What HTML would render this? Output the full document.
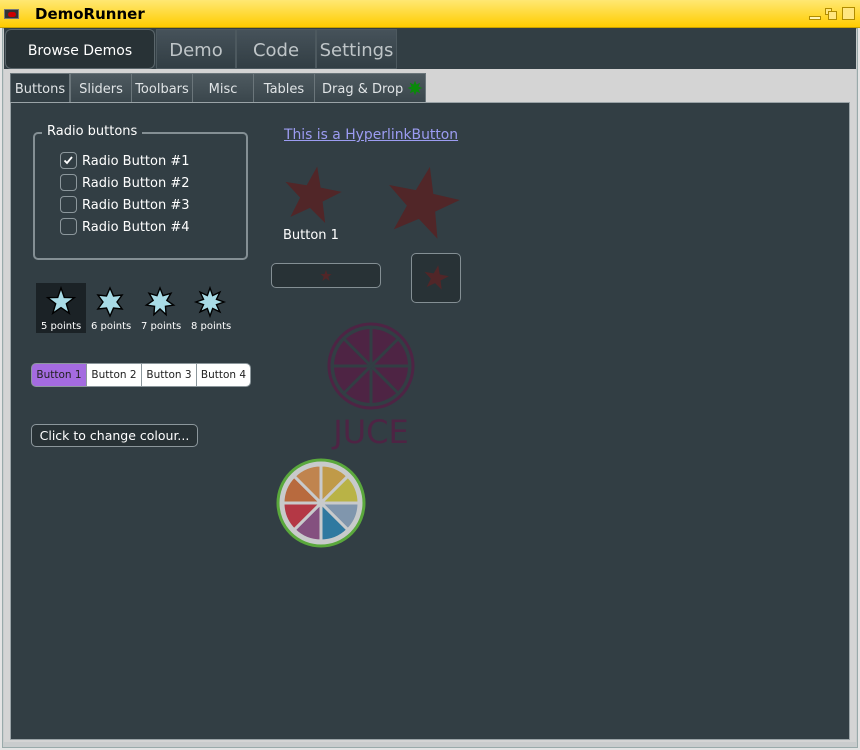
<!DOCTYPE html>
<html><head><meta charset="utf-8"><style>
*{margin:0;padding:0;box-sizing:border-box}
body{width:860px;height:750px;background:#e4e4e4;position:relative;overflow:hidden;font-family:"DejaVu Sans","Liberation Sans",sans-serif;}
.a{position:absolute}
#title{left:0;top:0;width:860px;height:28px;background:linear-gradient(#ffe873,#ffcc00);border-bottom:1px solid #c9a200}
#title .t{left:35px;top:5px;font-weight:bold;font-size:15px;color:#000}
#frame{left:2px;top:28px;width:856px;height:720px;background:#c9cccd;border:1px solid #9aa}
#top{left:4px;top:28px;width:852px;height:41px;background:#323e44}
.tt{top:29px;height:40px;color:#bfc5c8;font-size:18px;text-align:center;line-height:42px;background:linear-gradient(#46525a,#323e44);border:1px solid #4d595f}
#gray{left:4px;top:69px;width:852px;height:673px;background:#d4d4d4}
.it{top:73px;height:30px;color:#e0e4e6;font-size:13px;text-align:center;line-height:31px;background:linear-gradient(#4e5a60,#3a464c);border:1px solid #6b767b}
#panel{left:10px;top:102px;width:840px;height:638px;background:#323e44;border:1px solid #9aa3a7}
.w{color:#fff;font-size:13px;white-space:nowrap}
.cb{width:17px;height:17px;border:1.5px solid #8c979c;border-radius:4px}
.seg{top:364px;height:22px;font-size:10.5px;line-height:23px;text-align:center;background:#fff;color:#222}
</style></head><body>
<div class="a" id="frame"></div>
<div class="a" id="title">
 <div class="a" style="left:4px;top:9px;width:15px;height:10px;background:#333;border:1px solid #777"><div style="margin:2px 3px;width:8px;height:5px;background:#c00;border-radius:3px"></div></div>
 <div class="a t">DemoRunner</div>
 <div class="a" style="left:809px;top:16px;width:12px;height:4px;border:1px solid #b08c00;background:#fff3b0"></div>
 <div class="a" style="left:825px;top:8px;width:7px;height:7px;border:1px solid #b08c00;background:#ffe680"></div>
 <div class="a" style="left:828px;top:11px;width:9px;height:9px;border:1px solid #b08c00;background:#ffe680"></div>
 <div class="a" style="left:842px;top:7px;width:13px;height:13px;border:1px solid #b08c00;background:#ffe680"></div>
</div>
<div class="a" id="top"></div>
<div class="a tt" style="left:5px;width:150px;background:#283236;border:1px solid #5b666b;border-radius:6px;color:#fff;font-size:14px">Browse Demos</div>
<div class="a tt" style="left:156px;width:80px">Demo</div>
<div class="a tt" style="left:236px;width:80px">Code</div>
<div class="a tt" style="left:316px;width:81px">Settings</div>
<div class="a" id="gray"></div>
<div class="a it" style="left:10px;width:60px;background:#323e44;border-bottom:none;height:31px">Buttons</div>
<div class="a it" style="left:70px;width:62px">Sliders</div>
<div class="a it" style="left:131px;width:62px">Toolbars</div>
<div class="a it" style="left:192px;width:62px">Misc</div>
<div class="a it" style="left:253px;width:62px">Tables</div>
<div class="a it" style="left:314px;width:112px;text-align:left;padding-left:7px">Drag &amp; Drop</div>
<svg class="a" style="left:407px;top:80px" width="16" height="16" viewBox="-8 -8 16 16"><polygon fill="#0a8a0a" transform="scale(7.5)" points="0,-1 .191,-.462 .707,-.707 .462,-.191 1,0 .462,.191 .707,.707 .191,.462 0,1 -.191,.462 -.707,.707 -.462,.191 -1,0 -.462,-.191 -.707,-.707 -.191,-.462"/></svg>
<div class="a" id="panel"></div>
<div class="a" style="left:33px;top:132px;width:215px;height:128px;border:2px solid #848f94;border-radius:5px"></div>
<div class="a w" style="left:42px;top:124px;background:#323e44;padding:0 5px">Radio buttons</div>
<div class="a cb" style="left:60px;top:152px"><svg width="14" height="14" style="position:absolute;left:0;top:0"><path d="M3.5 7.5 L6 10 L11 4" stroke="#fff" stroke-width="1.8" fill="none"/></svg></div>
<div class="a w" style="left:82px;top:154px">Radio Button #1</div>
<div class="a cb" style="left:60px;top:174px"></div>
<div class="a w" style="left:82px;top:176px">Radio Button #2</div>
<div class="a cb" style="left:60px;top:196px"></div>
<div class="a w" style="left:82px;top:198px">Radio Button #3</div>
<div class="a cb" style="left:60px;top:218px"></div>
<div class="a w" style="left:82px;top:220px">Radio Button #4</div>

<div class="a" style="left:36px;top:283px;width:50px;height:50px;background:#1b2226"></div>
<svg class="a" style="left:30px;top:280px" width="220" height="60">
 <g fill="#a8dbe6" stroke="#000" stroke-width=".1">
 <polygon transform="translate(31,22) scale(14)" points="0,-1 .235,-.324 .951,-.309 .380,.124 .588,.809 0,.4 -.588,.809 -.380,.124 -.951,-.309 -.235,-.324"/>
 <polygon transform="translate(80,22) scale(14)" points="0,-1 .25,-.433 .866,-.5 .5,0 .866,.5 .25,.433 0,1 -.25,.433 -.866,.5 -.5,0 -.866,-.5 -.25,-.433"/>
 <polygon transform="translate(130,22) scale(14)" points="0,-1 .217,-.45 .782,-.623 .487,-.111 .975,.223 .391,.312 .434,.901 0,.5 -.434,.901 -.391,.312 -.975,.223 -.487,-.111 -.782,-.623 -.217,-.45"/>
 <polygon transform="translate(180,22) scale(14)" points="0,-1 .191,-.462 .707,-.707 .462,-.191 1,0 .462,.191 .707,.707 .191,.462 0,1 -.191,.462 -.707,.707 -.462,.191 -1,0 -.462,-.191 -.707,-.707 -.191,-.462"/>
 </g>
</svg>
<div class="a w" style="left:41px;top:321px;font-size:10px">5 points</div>
<div class="a w" style="left:91px;top:321px;font-size:10px">6 points</div>
<div class="a w" style="left:141px;top:321px;font-size:10px">7 points</div>
<div class="a w" style="left:191px;top:321px;font-size:10px">8 points</div>

<div class="a" style="left:31px;top:363px;width:220px;height:24px;border:1px solid #8c979c;border-radius:5px;background:#8c979c"></div>
<div class="a seg" style="left:32px;width:54px;background:#a46be0;border-radius:4px 0 0 4px">Button 1</div>
<div class="a seg" style="left:87px;width:54px">Button 2</div>
<div class="a seg" style="left:142px;width:54px">Button 3</div>
<div class="a seg" style="left:197px;width:53px;border-radius:0 4px 4px 0">Button 4</div>

<div class="a w" style="left:31px;top:424px;width:167px;height:23px;border:1px solid #8c979c;border-radius:5px;background:#283236;font-size:12.5px;line-height:22px;text-align:center">Click to change colour...</div>

<div class="a" style="left:284px;top:127px;color:#9c9cf2;font-size:13.9px;text-decoration:underline">This is a HyperlinkButton</div>
<svg class="a" style="left:270px;top:160px" width="200" height="150">
 <g fill="#512628">
 <polygon transform="translate(42,36) rotate(10) scale(30)" points="0,-1 .235,-.324 .951,-.309 .380,.124 .588,.809 0,.4 -.588,.809 -.380,.124 -.951,-.309 -.235,-.324"/>
 <polygon transform="translate(152,44) rotate(12) scale(38)" points="0,-1 .235,-.324 .951,-.309 .380,.124 .588,.809 0,.4 -.588,.809 -.380,.124 -.951,-.309 -.235,-.324"/>
 </g>
</svg>
<div class="a w" style="left:283px;top:228px">Button 1</div>
<div class="a" style="left:271px;top:263px;width:110px;height:25px;border:1.5px solid #848f94;border-radius:5px;background:#283236"></div>
<div class="a" style="left:411px;top:253px;width:50px;height:50px;border:1.5px solid #848f94;border-radius:5px;background:#283236"></div>
<svg class="a" style="left:270px;top:250px" width="200" height="60">
 <g fill="#512628">
 <polygon transform="translate(56,26) scale(6)" points="0,-1 .235,-.324 .951,-.309 .380,.124 .588,.809 0,.4 -.588,.809 -.380,.124 -.951,-.309 -.235,-.324"/>
 <polygon transform="translate(166,28) rotate(10) scale(13)" points="0,-1 .235,-.324 .951,-.309 .380,.124 .588,.809 0,.4 -.588,.809 -.380,.124 -.951,-.309 -.235,-.324"/>
 </g>
</svg>
<svg class="a" style="left:320px;top:318px" width="110" height="135">
 <g transform="translate(51,48)">
  <circle r="42" fill="none" stroke="#4e2444" stroke-width="3"/>
  <circle r="37" fill="#4e2444"/>
  <g stroke="#323e44" stroke-width="3"><line x1="0" y1="-40" x2="0" y2="40"/><line x1="-40" y1="0" x2="40" y2="0"/><line x1="-28" y1="-28" x2="28" y2="28"/><line x1="-28" y1="28" x2="28" y2="-28"/></g>
 </g>
 <text x="51" y="125" text-anchor="middle" font-family="DejaVu Sans,sans-serif" font-size="32" fill="#4e2444">JUCE</text>
</svg>
<svg class="a" style="left:276px;top:458px" width="90" height="90" viewBox="-45 -45 90 90">
 <circle r="43" fill="#c8cacb" stroke="#5aa83c" stroke-width="3"/>
 <g stroke="#c8cacb" stroke-width="3">
 <path d="M0 0 L0 -38 A38 38 0 0 1 26.87 -26.87Z" fill="#c09a48"/>
 <path d="M0 0 L26.87 -26.87 A38 38 0 0 1 38 0Z" fill="#b9b346"/>
 <path d="M0 0 L38 0 A38 38 0 0 1 26.87 26.87Z" fill="#8096ad"/>
 <path d="M0 0 L26.87 26.87 A38 38 0 0 1 0 38Z" fill="#2f79a0"/>
 <path d="M0 0 L0 38 A38 38 0 0 1 -26.87 26.87Z" fill="#84507f"/>
 <path d="M0 0 L-26.87 26.87 A38 38 0 0 1 -38 0Z" fill="#b43845"/>
 <path d="M0 0 L-38 0 A38 38 0 0 1 -26.87 -26.87Z" fill="#b86a3e"/>
 <path d="M0 0 L-26.87 -26.87 A38 38 0 0 1 0 -38Z" fill="#c0844e"/>
 </g>
</svg>
</body></html>
